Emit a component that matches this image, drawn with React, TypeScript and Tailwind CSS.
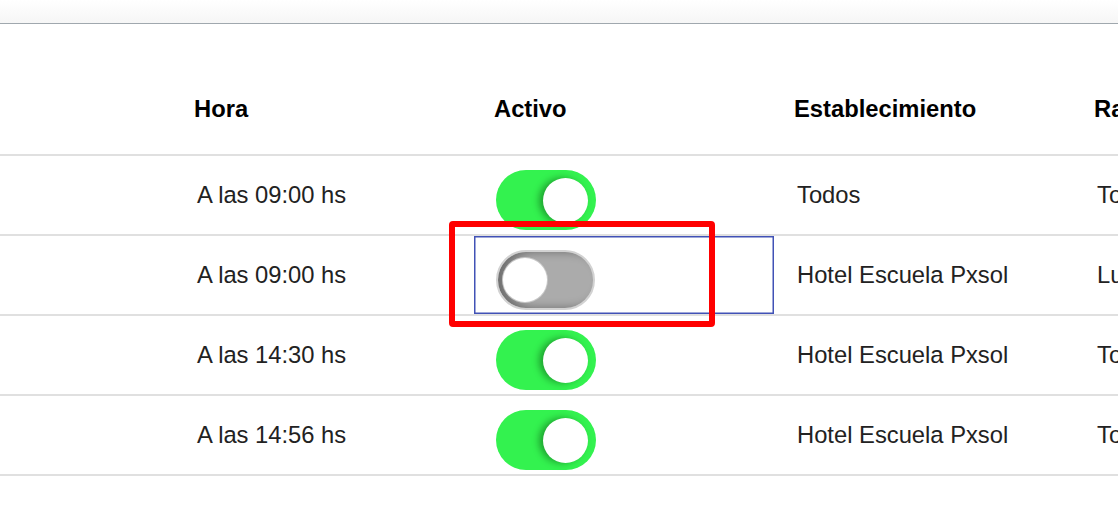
import React from "react";

type Row = { hora: string; activo: boolean; establecimiento: string; rango: string; focused?: boolean };

const rows: Row[] = [
  { hora: "A las 09:00 hs", activo: true, establecimiento: "Todos", rango: "Todos" },
  { hora: "A las 09:00 hs", activo: false, establecimiento: "Hotel Escuela Pxsol", rango: "Lunes", focused: true },
  { hora: "A las 14:30 hs", activo: true, establecimiento: "Hotel Escuela Pxsol", rango: "Todos" },
  { hora: "A las 14:56 hs", activo: true, establecimiento: "Hotel Escuela Pxsol", rango: "Todos" },
];

const cols = "grid grid-cols-[174px_300px_300px_300px_300px] w-[1374px]";

export default function App() {
  return (
    <main className="relative h-[522px] w-[1118px] overflow-hidden bg-white font-['Liberation_Sans',Arial,sans-serif]">
      <div className="h-[24px] border-b border-[#a0a8ae] bg-gradient-to-b from-white to-[#f6f6f6]" />

      <div className={`${cols} h-[132px] items-end border-b-2 border-[#e0e0e0] pb-[32px] text-[23.75px] font-bold leading-[26px] text-black`}>
        <div />
        <div className="pl-[20px]">Hora</div>
        <div className="pl-[20px]">Activo</div>
        <div className="pl-[20px]">Establecimiento</div>
        <div className="pl-[20px]">Rango</div>
      </div>

      {rows.map((row, index) => (
        <div key={index} className={`${cols} h-[80px] border-b-2 border-[#e0e0e0] text-[23.75px] leading-[26px] text-[#222]`}>
          <div />
          <div className="flex items-center pl-[23px]">{row.hora}</div>
          <div className={`flex items-start pl-[22px] pt-[14px] ${row.focused ? "shadow-[inset_0_0_0_1.5px_#4152b6]" : ""}`}>
            <Toggle on={row.activo} />
          </div>
          <div className="flex items-center pl-[23px]">{row.establecimiento}</div>
          <div className="flex items-center pl-[23px]">{row.rango}</div>
        </div>
      ))}

      <div className="pointer-events-none absolute left-[449px] top-[221px] h-[106px] w-[266px] rounded-[4px] border-[6px] border-[#ff0000]" />
    </main>
  );
}

function Toggle({ on }: Readonly<{ on: boolean }>) {
  if (on) {
    return (
      <div className="flex h-[60px] w-[100px] items-center justify-end rounded-full bg-[#33f24f] px-[8px]">
        <div className="size-[45px] rounded-full bg-white shadow-[-4px_0_7px_rgba(0,40,0,0.4)]" />
      </div>
    );
  }
  return (
    <div className="flex h-[60px] w-[99px] items-center rounded-full border-2 border-[#d2d2d2] bg-[#ababab] px-[5px] shadow-[inset_8px_0_10px_rgba(0,0,0,0.35)]">
      <div className="size-[44px] rounded-full bg-white shadow-[0_0_0_1px_#c8c8c8]" />
    </div>
  );
}
